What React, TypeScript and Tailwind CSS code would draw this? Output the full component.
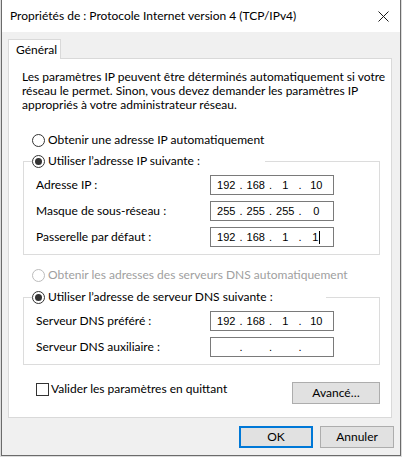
import { useState } from "react";

const font = "font-['Lato',sans-serif]";

function Radio({ checked, disabled }: { checked?: boolean; disabled?: boolean }) {
  return (
    <span
      className={
        "flex size-[13px] shrink-0 items-center justify-center rounded-full border bg-white " +
        (disabled ? "border-[#bcbcbc]" : "border-[#333333]")
      }
    >
      {checked ? <span className="size-[7px] rounded-full bg-[#333333]" /> : null}
    </span>
  );
}

function IpField({ parts, cursor }: { parts: string[]; cursor?: boolean }) {
  return (
    <div className="flex h-[20px] w-[124px] items-center border border-[#7a7a7a] bg-white px-[2px] font-['Liberation_Sans',sans-serif] text-[11px] text-black">
      {parts.map((p, i) => (
        <div key={i} className="flex flex-1 items-center">
          <span className="flex-1 text-center">
            {p}
            {cursor && i === 3 ? <span className="ml-px inline-block h-[13px] w-px bg-black align-middle" /> : null}
          </span>
          {i < 3 ? <span className="w-[3px]">.</span> : null}
        </div>
      ))}
    </div>
  );
}

function Row({ label, parts, cursor }: { label: string; parts: string[]; cursor?: boolean }) {
  return (
    <div className="flex items-center">
      <span className="w-[174px]">{label}</span>
      <IpField parts={parts} cursor={cursor} />
    </div>
  );
}

export default function App() {
  const [validate, setValidate] = useState(false);

  return (
    <div className={"flex h-[457px] w-[402px] bg-[#dcdcdc] pl-px text-[12px] leading-[14px] text-black " + font}>
      <div className="flex h-[456px] w-[400px] flex-col border-x border-b border-[#6b6b6b] bg-[#f0f0f0]">
        {/* title bar */}
        <div className="flex h-[32px] shrink-0 items-center justify-between bg-white pl-[8px] pr-[11px]">
          <span className="text-[12px]">Propriétés de : Protocole Internet version 4 (TCP/IPv4)</span>
          <svg width="11" height="11" viewBox="0 0 11 11" className="mt-px">
            <path d="M0.5 0.5 L10.5 10.5 M10.5 0.5 L0.5 10.5" stroke="#1a1a1a" strokeWidth="1" />
          </svg>
        </div>

        {/* tab */}
        <div className="mt-[7px] flex pl-[6px]">
          <div className="relative z-10 -mb-px flex h-[20px] w-[53px] items-center border-x border-t border-[#d9d9d9] bg-white pl-[7px]">
            Général
          </div>
        </div>

        {/* panel */}
        <div className="ml-[6px] flex h-[360px] w-[384px] flex-col border border-[#d9d9d9] bg-white">
          <div className="flex flex-col pl-[13px] pt-[11px]">
            <span>Les paramètres IP peuvent être déterminés automatiquement si votre</span>
            <span>réseau le permet. Sinon, vous devez demander les paramètres IP</span>
            <span>appropriés à votre administrateur réseau.</span>
          </div>

          <div className="ml-[23px] mt-[21px] flex items-center gap-[3px]">
            <Radio />
            <span>Obtenir une adresse IP automatiquement</span>
          </div>

          <fieldset className="ml-[14px] mt-[7px] w-[357px] border border-[#dcdcdc] pb-[7px] pl-[12px]">
            <legend className="-ml-[4px] flex w-[233px] items-center gap-[3px]">
              <Radio checked />
              <span>Utiliser l’adresse IP suivante :</span>
            </legend>
            <div className="mt-[7px] flex flex-col gap-[6px]">
              <Row label="Adresse IP :" parts={["192", "168", "1", "10"]} />
              <Row label="Masque de sous-réseau :" parts={["255", "255", "255", "0"]} />
              <Row label="Passerelle par défaut :" parts={["192", "168", "1", "1"]} cursor />
            </div>
          </fieldset>

          <div className="ml-[23px] mt-[13px] flex items-center gap-[3px] text-[#a0a0a0]">
            <Radio disabled />
            <span>Obtenir les adresses des serveurs DNS automatiquement</span>
          </div>

          <fieldset className="ml-[14px] mt-[8px] w-[357px] border border-[#dcdcdc] pb-[7px] pl-[12px]">
            <legend className="-ml-[4px] flex w-[294px] items-center gap-[3px]">
              <Radio checked />
              <span>Utiliser l’adresse de serveur DNS suivante :</span>
            </legend>
            <div className="mt-[7px] flex flex-col gap-[6px]">
              <Row label="Serveur DNS préféré :" parts={["192", "168", "1", "10"]} />
              <Row label="Serveur DNS auxiliaire :" parts={["", "", "", ""]} />
            </div>
          </fieldset>

          <div className="ml-[27px] mr-[11px] mt-[17px] flex items-start justify-between">
            <label className="flex items-center gap-[2px]" onClick={() => setValidate(!validate)}>
              <span className="flex size-[13px] items-center justify-center border border-[#333333] bg-white text-[10px]">
                {validate ? "✓" : ""}
              </span>
              <span>Valider les paramètres en quittant</span>
            </label>
            <button className="h-[22px] w-[88px] border border-[#adadad] bg-[#e1e1e1] text-[12px]">
              Avancé…
            </button>
          </div>
        </div>

        {/* bottom buttons */}
        <div className="mr-[6px] mt-[8px] flex justify-end gap-[7px]">
          <button className="h-[22px] w-[74px] border-2 border-[#0078d7] bg-[#e1e1e1] text-[12px]">OK</button>
          <button className="h-[22px] w-[74px] border border-[#adadad] bg-[#e1e1e1] text-[12px]">Annuler</button>
        </div>
      </div>
    </div>
  );
}
